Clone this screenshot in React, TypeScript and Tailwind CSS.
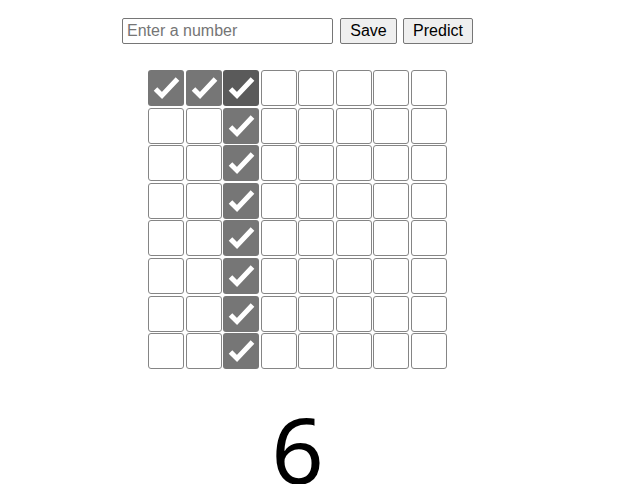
const checked = new Set<number>([0, 1, 2, 10, 18, 26, 34, 42, 50, 58]);

function Cell({ on, dark }: { on: boolean; dark?: boolean }) {
  if (!on) {
    return <div className="h-[36px] w-[36px] rounded-[3px] border border-[#858585] bg-white" />;
  }
  return (
    <div
      className={`h-[36px] w-[36px] rounded-[3px] ${dark ? "bg-[#5a5a5a]" : "bg-[#767676]"}`}
    >
      <svg width="36" height="36" viewBox="0 0 36 36">
        <polyline
          points="7.5,19 14,25.5 29.5,9"
          fill="none"
          stroke="white"
          strokeWidth="5"
          strokeLinecap="butt"
          strokeLinejoin="miter"
        />
      </svg>
    </div>
  );
}

export default function App() {
  const cells = Array.from({ length: 64 }, (_, i) => i);
  return (
    <div className="w-[595px] bg-white font-['Liberation_Sans',Arial,sans-serif]">
      <div className="flex items-center justify-center gap-[6px] pt-[18px]">
        <input
          placeholder="Enter a number"
          className="mr-[1px] h-[26px] w-[211px] rounded-[2px] border border-[#767676] px-[4px] text-[16px] text-black placeholder:text-[#757575]"
        />
        <button className="h-[26px] w-[57px] rounded-[2px] border border-[#767676] bg-[#efefef] text-[16px] text-black">
          Save
        </button>
        <button className="h-[26px] w-[70px] rounded-[2px] border border-[#767676] bg-[#efefef] text-[16px] text-black">
          Predict
        </button>
      </div>
      <div className="mx-auto mt-[26px] grid w-[299px] grid-cols-8 gap-[1.6px]">
        {cells.map((i) => (
          <Cell key={i} on={checked.has(i)} dark={i === 2} />
        ))}
      </div>
      <div className="mt-[45px] text-center font-['Noto_Sans',sans-serif] text-[92px] leading-[70px] text-black">
        6
      </div>
    </div>
  );
}
